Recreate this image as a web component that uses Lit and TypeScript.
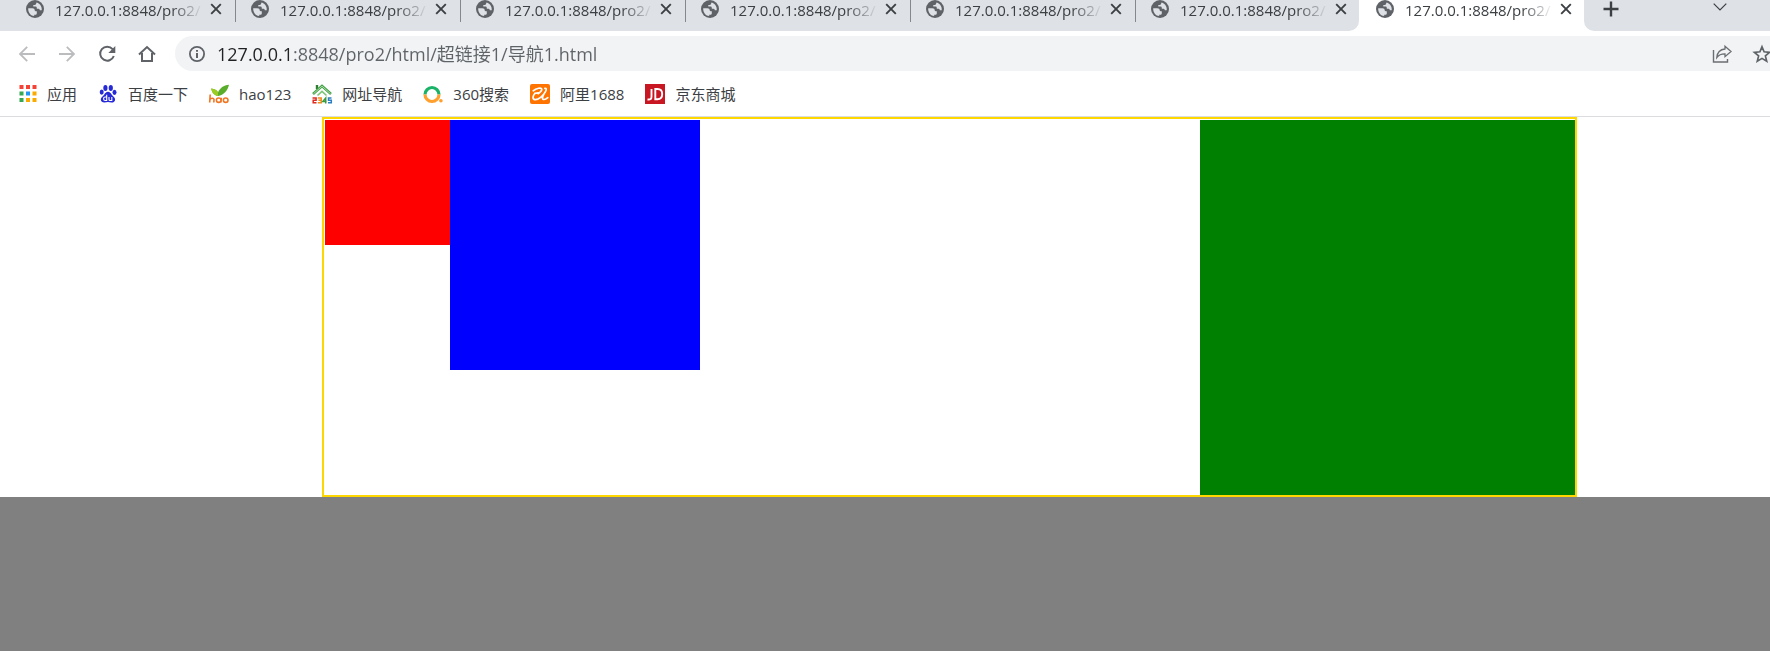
import { LitElement, html, css, svg } from "lit";
import { customElement, property } from "lit/decorators.js";

const icon = (viewBox: string, body: unknown, cls = "") =>
  html`<svg class="icon ${cls}" viewBox=${viewBox} aria-hidden="true">${body}</svg>`;

const globe = icon("0 0 18 18", svg`
  <circle cx="9" cy="9" r="9" fill="#5f6368"></circle>
  <path d="M2.200 8.200h4.200c1.500 0 2.300.9 2.300 2.100 0 .9.8 1 1.700 1h.4v1.900c0 1-.8 1.500-1.700 1.500h-.9v1.300C4.900 15.900 1.900 12.600 2.200 8.200z" fill="#dee1e6"></path>
  <path d="M10.200 2.200v1.300c0 .9-.7 1.400-1.500 1.400H7.300v1.500h2.200c1 0 1.300.7 1.300 1.500v.9h1.800c.9 0 1 .8 1.300 1.500h1.800c.4-3.800-1.700-7.100-5.700-8.100z" fill="#dee1e6"></path>`);
const cross = icon("0 0 12 12", svg`<path d="M1.200 1.200l9.600 9.600M10.800 1.200l-9.600 9.600" stroke="#3c4043" stroke-width="1.900"></path>`, "small");
const plus = icon("0 0 16 16", svg`<path d="M8 .5v15M.5 8h15" stroke="#3c4043" stroke-width="2.400"></path>`, "nav");
const chevron = icon("0 0 14 8", svg`<path d="M.7.7L7 7 13.300.7" fill="none" stroke="#3c4043" stroke-width="1.200"></path>`, "chevron");
const back = icon("0 0 16 16", svg`<path d="M16 8H1.500M8.200.8L1 8l7.200 7.200" fill="none" stroke="#babcbe" stroke-width="1.800"></path>`, "nav");
const forward = icon("0 0 16 16", svg`<path d="M0 8h14.500M7.800.8L15 8l-7.200 7.200" fill="none" stroke="#babcbe" stroke-width="1.800"></path>`, "nav");
const reload = icon("0 0 18 18", svg`
  <path d="M14.600 4.200A7 7 0 1 0 15.800 11" fill="none" stroke="#5f6368" stroke-width="2"></path>
  <path d="M17.300 1v7h-7z" fill="#5f6368"></path>`, "mid");
const home = icon("0 0 18 18", svg`<path d="M1 9.500L9 2l8 7.500M4 8v8h10V8" fill="none" stroke="#5f6368" stroke-width="2"></path>`, "mid");
const info = icon("0 0 16 16", svg`
  <circle cx="8" cy="8" r="7.100" fill="none" stroke="#5f6368" stroke-width="1.800"></circle>
  <path d="M8 7v5M8 4v1.800" stroke="#5f6368" stroke-width="2"></path>`, "nav");
const share = icon("0 0 20 18", svg`
  <path d="M1.500 5v12h14v-3" fill="none" stroke="#6b6e72" stroke-width="1.400"></path>
  <path d="M13 1.200l6 5.300-6 5.200V8.900c-3.700-.1-6.200 1-8.200 3.600.4-4.500 3-8 8.200-8.500z" fill="none" stroke="#6b6e72" stroke-width="1.300"></path>`, "share");
const star = icon("0 0 18 18", svg`<path d="M9 1.800l2.100 5 5.500.5-4.200 3.600 1.300 5.400L9 13.400l-4.700 2.900 1.300-5.400L1.400 7.300l5.500-.5z" fill="none" stroke="#5f6368" stroke-width="1.700"></path>`, "mid");

const dotColors = ["#f44336", "#f44336", "#f44336", "#34a853", "#2196f3", "#fbab00", "#34a853", "#fbab00", "#fbab00"];
const apps = icon("0 0 20 20", dotColors.map((c, i) =>
  svg`<rect x=${2.5 + (i % 3) * 6.500} y=${1 + Math.floor(i / 3) * 6.500} width="4" height="4" fill=${c}></rect>`), "mark");
const baidu = icon("0 0 20 20", svg`
  <g fill="#2529d8">
    <ellipse cx="7.400" cy="4" rx="2.100" ry="2.900"></ellipse>
    <ellipse cx="12.800" cy="4" rx="2.100" ry="2.900"></ellipse>
    <ellipse cx="3.700" cy="8.100" rx="2" ry="2.600"></ellipse>
    <ellipse cx="16.500" cy="8.300" rx="2" ry="2.600"></ellipse>
    <path d="M10 7.800c1.800 0 2.800 1.500 3.800 2.900 1.300 1.600 3.500 2.700 3.300 5-.2 2-1.700 2.900-3.600 2.800-1.300-.1-2.200-.4-3.500-.4s-2.300.400-3.600.400c-2.100 0-3.500-1-3.600-2.900-.1-2.200 2-3.200 3.300-4.900C7.100 9.300 8.200 7.800 10 7.800z"></path>
  </g>
  <path d="M8.700 10.800v5.700H7.300a1.700 1.700 0 0 1 0-3.500h1.400M11 12.900v2.600c0 .7.400 1 1 1h1.800v-3.600" fill="none" stroke="#fff" stroke-width="1.100"></path>`, "mark");
const hao = icon("0 0 20 20", svg`
  <path d="M9 12C5.500 11.500 3 9 2.200 4.500 5.500 4.800 8 6 9 8.500 11 4 14.500 1.200 20 .8 18.500 7 15 11 9 12z" fill="#5aad2a"></path>
  <path d="M9 12C5.500 11.500 3 9 2.200 4.500 5.500 4.800 8 6 9 8.500z" fill="#9ccc1f"></path>
  <path d="M1.200 10.500L.7 18.500M1 15.500c.8-1.800 4.200-1.800 4 .5l-.2 2.500M12.300 13.800L12 18.500M12 16.200a2.300 2.200 0 1 1-4.600 0 2.300 2.200 0 0 1 4.600 0zM19 16.200a2.300 2.200 0 1 1-4.600 0 2.300 2.200 0 0 1 4.600 0z" fill="none" stroke="#f07624" stroke-width="1.600"></path>`, "mark");
const nav2345 = icon("0 0 20 20", svg`
  <path d="M5 5V1" stroke="#2e7d32" stroke-width="2.400"></path>
  <path d="M1 10L10 2l9 8" fill="none" stroke="#43a047" stroke-width="2.600"></path>
  <path d="M1.500 9.700L10 2.200l8.500 7.500" fill="none" stroke="#c5e8bd" stroke-width=".8"></path>
  <path d="M5.500 11.500L10 7.400l4.500 4.100" fill="none" stroke="#7cc576" stroke-width="1.600"></path>
  <g fill="none" stroke-width="1.500">
    <path d="M.5 14h3.600v2.200H1.200v2.500h3.300" stroke="#e02b20"></path>
    <path d="M5.800 14h3.400v4.700H5.800M6.500 16.300h2.700" stroke="#f28b1d"></path>
    <path d="M13.700 19.500V14l-2.900 3.500h3.800" stroke="#3a9a3f"></path>
    <path d="M19.500 14h-3v2.200h2.800v2.500h-3.300" stroke="#2b7fc2"></path>
  </g>`, "mark");
const search360 = icon("0 0 20 20", svg`
  <path d="M2 10.500a7 7 0 1 1 14 0" fill="none" stroke="#19b267" stroke-width="3.200"></path>
  <path d="M2 10.500a7 7 0 0 0 14 0" fill="none" stroke="#ff9f2e" stroke-width="3.200"></path>
  <circle cx="17.900" cy="16.800" r="1.800" fill="#ff9f2e"></circle>`, "mark");
const ali = icon("0 0 20 20", svg`
  <rect width="20" height="20" rx="2" fill="#ff7300"></rect>
  <path d="M3.200 6.800C6 4.300 11.800 3 11.800 5.300c0 1.700-1.800 3.200-3.600 4.400M5 9.300l3.300-.4M4.800 9.500c-2 2.300-2.800 5.800.2 6.200 3.700.3 8.700-4.700 10.500-8 1.300-2.400.8-3.500-.6-3.300M14.500 9.200c-1.500 2.600-3 5.600-1.200 6.200 1.400.4 3.200-.6 4.500-1.800" fill="none" stroke="#fff" stroke-width="1.700" stroke-linecap="round"></path>`, "mark");
const jd = icon("0 0 20 20", svg`
  <rect width="20" height="20" fill="#c81623"></rect>
  <path d="M2.500 15.500c3 .3 4-.5 4-3V5M10.300 5v10.300h2.200c3.200 0 4.700-2 4.700-5.200S15.700 5 12.500 5z" fill="none" stroke="#fff" stroke-width="1.900"></path>`, "mark");

const shared = css`
  :host { display: block; font-family: "Open Sans", "Noto Sans CJK SC", sans-serif; }
  button { display: flex; flex: none; align-items: center; justify-content: center; padding: 0; border: 0; background: none; font: inherit; }
  .icon { display: block; flex: none; width: 18px; height: 18px; overflow: visible; }
  .small { width: 12px; height: 12px; }
  .nav { width: 16px; height: 16px; }
  .chevron { width: 14px; height: 8px; }
  .share { width: 20px; height: 18px; }
  .mark { width: 20px; height: 20px; }
`;

@customElement("tab-strip")
class TabStrip extends LitElement {
  @property({ type: Number }) count = 7;

  static styles = [shared, css`
    .strip { display: flex; height: 31px; background: #fff; overflow: hidden; }
    .rest { background: #dee1e6; }
    .tabs { display: flex; flex: none; padding-left: 9px; border-bottom-right-radius: 10px; }
    .tab { box-sizing: border-box; display: flex; flex: none; width: 225px; padding-left: 17px; }
    .title { flex: none; width: 148px; margin: 0 3px 0 11px; font-size: 15px; line-height: 20px; color: #3c4043; white-space: nowrap;
      mask-image: linear-gradient(to right, #000 116px, transparent 148px); }
    .close { width: 20px; height: 18px; }
    .line { flex: none; width: 1px; height: 22px; margin: 0 -2px 0 9px; background: #84878b; }
    .tail { display: flex; flex: 1; justify-content: space-between; padding: 0 43px 0 17px; border-bottom-left-radius: 10px; }
    .add { width: 20px; height: 18px; }
    .menu { width: 14px; height: 13px; }
  `];

  private tab(last: boolean, active: boolean) {
    return html`<div class="tab" role="tab" aria-selected=${active}>
      ${globe}<span class="title">127.0.0.1:8848/pro2/</span>
      <button class="close" aria-label="Close tab">${cross}</button>
      ${last ? "" : html`<span class="line"></span>`}
    </div>`;
  }

  render() {
    const idle = this.count - 1;
    return html`<div class="strip" role="tablist">
      <div class="tabs rest">${Array.from({ length: idle }, (_, i) => this.tab(i === idle - 1, false))}</div>
      ${this.tab(true, true)}
      <div class="tail rest">
        <button class="add" aria-label="New tab">${plus}</button>
        <button class="menu" aria-label="Search tabs">${chevron}</button>
      </div>
    </div>`;
  }
}

@customElement("address-bar")
class AddressBar extends LitElement {
  static styles = [shared, css`
    .bar { display: flex; padding: 5px 0 1px 7px; overflow: hidden; }
    .bar > button { width: 40px; }
    .omnibox { display: flex; flex: 1; align-items: center; height: 35px; margin-left: 8px; padding-left: 14px; border-radius: 18px 0 0 18px; background: #f1f3f4; }
    .url { box-sizing: border-box; flex: 1; min-width: 0; height: 35px; margin-left: 12px; padding: 0 0 2px; border: 0; outline: 0; font: inherit; font-size: 18px;
      color: transparent; background: linear-gradient(to right, #202124 76px, #5f6368 76px); background-clip: text; }
    .share-button { width: 20px; }
    .star-button { width: 18px; margin: 0 -1px 0 21px; }
  `];

  render() {
    return html`<div class="bar">
      <button aria-label="Back">${back}</button>
      <button aria-label="Forward">${forward}</button>
      <button aria-label="Reload">${reload}</button>
      <button aria-label="Home">${home}</button>
      <div class="omnibox">
        ${info}
        <input class="url" aria-label="Address" spellcheck="false" value="127.0.0.1:8848/pro2/html/超链接1/导航1.html">
        <button class="share-button" aria-label="Share">${share}</button>
        <button class="star-button" aria-label="Bookmark">${star}</button>
      </div>
    </div>`;
  }
}

@customElement("bookmark-bar")
class BookmarkBar extends LitElement {
  static styles = [shared, css`
    .bar { display: flex; align-items: center; gap: 21px; height: 44px; padding-left: 17px; border-bottom: 1px solid #dadce0; }
    .bookmark { display: flex; align-items: center; gap: 10px; font-size: 15px; line-height: 20px; color: #3c4043; text-decoration: none; white-space: nowrap; }
  `];

  private items: [unknown, string][] = [
    [apps, "应用"], [baidu, "百度一下"], [hao, "hao123"], [nav2345, "网址导航"],
    [search360, "360搜索"], [ali, "阿里1688"], [jd, "京东商城"],
  ];

  render() {
    return html`<nav class="bar">${this.items.map(([mark, label]) =>
      html`<a class="bookmark" href="#">${mark}<span>${label}</span></a>`)}</nav>`;
  }
}

@customElement("app-root")
class AppRoot extends LitElement {
  static styles = css`
    :host { display: flex; flex-direction: column; min-height: 100vh; background: #fff; overflow: hidden; }
    .page { display: grid; grid-template-columns: 322fr 1255px 193fr; }
    .frame { grid-column: 2; display: flex; align-items: flex-start; padding: 1px 0 0 1px; border: 2px solid #ffd700; }
    .red { width: 125px; height: 125px; background: #f00; }
    .blue { width: 250px; height: 250px; background: #00f; }
    .green { width: 375px; height: 375px; margin-left: auto; background: #008000; }
    .footer { flex: 1; background: #808080; }
  `;

  render() {
    return html`
      <tab-strip></tab-strip>
      <address-bar></address-bar>
      <bookmark-bar></bookmark-bar>
      <main class="page">
        <div class="frame">
          <div class="red"></div>
          <div class="blue"></div>
          <div class="green"></div>
        </div>
      </main>
      <div class="footer"></div>
    `;
  }
}
